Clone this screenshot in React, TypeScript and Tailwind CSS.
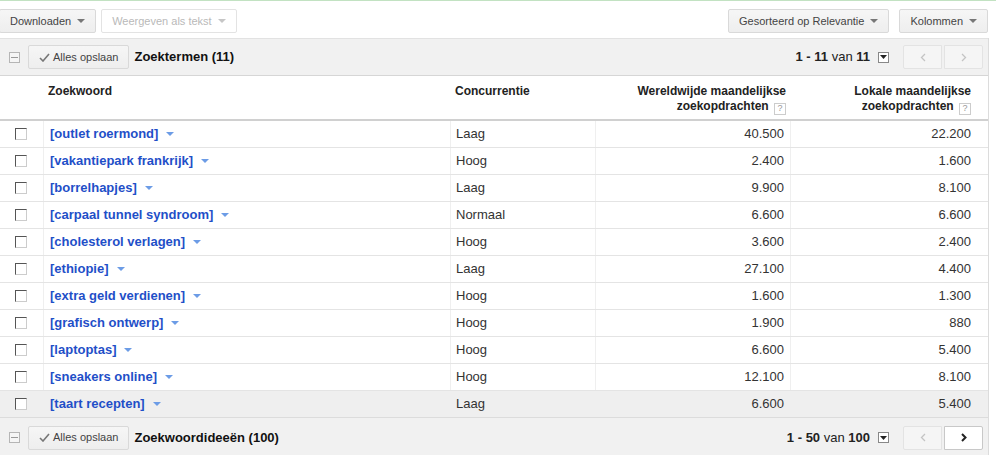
import React from "react";

const rows: [string, string, string, string][] = [
  ["outlet roermond", "Laag", "40.500", "22.200"],
  ["vakantiepark frankrijk", "Hoog", "2.400", "1.600"],
  ["borrelhapjes", "Laag", "9.900", "8.100"],
  ["carpaal tunnel syndroom", "Normaal", "6.600", "6.600"],
  ["cholesterol verlagen", "Hoog", "3.600", "2.400"],
  ["ethiopie", "Laag", "27.100", "4.400"],
  ["extra geld verdienen", "Hoog", "1.600", "1.300"],
  ["grafisch ontwerp", "Hoog", "1.900", "880"],
  ["laptoptas", "Hoog", "6.600", "5.400"],
  ["sneakers online", "Hoog", "12.100", "8.100"],
  ["taart recepten", "Laag", "6.600", "5.400"],
];

function Caret({ color = "#777" }: { color?: string }) {
  return (
    <svg width="8" height="4" viewBox="0 0 8 4" className="inline-block shrink-0">
      <path d="M0 0 L8 0 L4 4 Z" fill={color} />
    </svg>
  );
}

function Btn({
  children,
  disabled,
  className = "",
}: {
  children: React.ReactNode;
  disabled?: boolean;
  className?: string;
}) {
  return (
    <div
      className={
        "flex h-[24px] shrink-0 items-center whitespace-nowrap rounded-[2px] border text-[11px] " +
        (disabled
          ? "border-[#e3e3e3] bg-white text-[#b9b9b9] "
          : "border-[#d9d9d9] bg-gradient-to-b from-[#f6f6f6] to-[#eeeeee] text-[#444] ") +
        className
      }
    >
      {children}
    </div>
  );
}

function MinusBox() {
  return (
    <div className="flex h-[11px] w-[11px] items-center justify-center border border-[#b5b5b5] bg-[#f5f5f5]">
      <div className="h-px w-[7px] bg-[#999]" />
    </div>
  );
}

function Check() {
  return (
    <svg width="11" height="9" viewBox="0 0 11 9" className="shrink-0">
      <path d="M1 5 L4 8 L10 1" stroke="#777" strokeWidth="1.6" fill="none" />
    </svg>
  );
}

function Chevron({ dir, color, bold }: { dir: "l" | "r"; color: string; bold?: boolean }) {
  return (
    <svg width="6" height="9" viewBox="0 0 6 9">
      <path
        d={dir === "l" ? "M5 1 L1.5 4.5 L5 8" : "M1 1 L4.5 4.5 L1 8"}
        stroke={color}
        strokeWidth={bold ? 2 : 1.3}
        fill="none"
      />
    </svg>
  );
}

function DropBox() {
  return (
    <div className="flex h-[11px] w-[11px] items-center justify-center border border-[#888] bg-white">
      <svg width="7" height="4" viewBox="0 0 7 4">
        <path d="M0 0 L7 0 L3.5 4 Z" fill="#222" />
      </svg>
    </div>
  );
}

function Pager({ from, to, total, nextActive }: { from: string; to: string; total: string; nextActive?: boolean }) {
  return (
    <div className="ml-auto flex items-center">
      <div className="whitespace-nowrap text-[13px] text-[#222]">
        <b>
          {from} - {to}
        </b>{" "}
        van <b>{total}</b>
      </div>
      <div className="ml-[8px]">
        <DropBox />
      </div>
      <div className="ml-[14px] flex gap-[2px]">
        <div className="flex h-[24px] w-[39px] items-center justify-center rounded-l-[2px] border border-[#e3e3e3] bg-[#f5f5f5]">
          <Chevron dir="l" color="#c4c4c4" />
        </div>
        <div
          className={
            "flex h-[24px] w-[39px] items-center justify-center rounded-r-[2px] border " +
            (nextActive ? "border-[#c8c8c8] bg-white" : "border-[#e3e3e3] bg-[#f5f5f5]")
          }
        >
          <Chevron dir="r" color={nextActive ? "#222" : "#c4c4c4"} bold={nextActive} />
        </div>
      </div>
    </div>
  );
}

function Checkbox() {
  return (
    <div className="h-[12px] w-[12px] border-t-[1.5px] border-l-[1.5px] border-r border-b border-t-[#555] border-l-[#555] border-r-[#ccc] border-b-[#ccc] bg-white" />
  );
}

function Help() {
  return (
    <span className="ml-[2px] inline-flex h-[12px] w-[12px] items-center justify-center border border-[#ccc] align-[-1px] text-[9px] font-normal text-[#999]">
      ?
    </span>
  );
}

export default function App() {
  return (
    <div
      className="h-[455px] w-[996px] overflow-hidden bg-white text-[#222]"
      style={{ fontFamily: '"Liberation Sans", Arial, sans-serif' }}
    >
      <div className="h-px bg-[#c2e2c2]" />
      {/* toolbar */}
      <div className="flex h-[37px] items-start pt-[8px] pr-[8px]">
        <Btn className="-ml-px gap-[6px] pl-[10px] pr-[10px]">
          Downloaden <Caret />
        </Btn>
        <Btn disabled className="ml-[5px] gap-[6px] pl-[10px] pr-[10px]">
          Weergeven als tekst <Caret color="#c6c6c6" />
        </Btn>
        <Btn className="ml-auto gap-[6px] pl-[10px] pr-[10px]">
          Gesorteerd op Relevantie <Caret />
        </Btn>
        <Btn className="ml-[10px] gap-[6px] pl-[10px] pr-[10px]">
          Kolommen <Caret />
        </Btn>
      </div>

      <div className="w-[989px] border-r border-[#dcdcdc]">
        {/* gray bar */}
        <div className="flex h-[38px] items-center border-t border-b border-t-[#e2e2e2] border-b-[#d6d6d6] bg-[#f1f1f1] pr-[5px]">
          <div className="ml-[9px]">
            <MinusBox />
          </div>
          <Btn className="ml-[8px] gap-[3px] pl-[10px] pr-[10px]">
            <Check /> Alles opslaan
          </Btn>
          <div className="ml-[5px] text-[13px] font-bold text-[#111]">Zoektermen (11)</div>
          <Pager from="1" to="11" total="11" />
        </div>

        {/* header */}
        <div className="flex h-[45px] border-b-2 border-[#d0d0d0] text-[12px] font-bold leading-[15px] text-[#222]">
          <div className="w-[44px]" />
          <div className="w-[407px] pl-[4px] pt-[8px]">Zoekwoord</div>
          <div className="w-[145px] pl-[4px] pt-[8px]">Concurrentie</div>
          <div className="w-[195px] pr-[5px] pt-[8px] text-right">
            Wereldwijde maandelijkse
            <br />
            zoekopdrachten <Help />
          </div>
          <div className="flex-1 pr-[17px] pt-[8px] text-right">
            Lokale maandelijkse
            <br />
            zoekopdrachten <Help />
          </div>
        </div>

        {/* rows */}
        {rows.map(([kw, c, w, l], i) => (
          <div
            key={kw}
            className={
              "flex h-[27px] border-b border-[#e4e4e4] text-[13px] " +
              (i === rows.length - 1 ? "bg-[#efefef]" : "bg-white")
            }
          >
            <div className="flex w-[44px] items-center border-r border-[#efefef] pl-[15px]">
              <Checkbox />
            </div>
            <div className="flex w-[407px] items-center gap-[8px] border-r border-[#efefef] pl-[6px] font-bold text-[#1f4fc8]">
              <span>[{kw}]</span>
              <Caret color="#6c9ce6" />
            </div>
            <div className="flex w-[145px] items-center border-r border-[#efefef] pl-[5px] text-[#333]">{c}</div>
            <div className="flex w-[195px] items-center justify-end border-r border-[#efefef] pr-[6px] text-[#333]">{w}</div>
            <div className="flex flex-1 items-center justify-end pr-[17px] text-[#333]">{l}</div>
          </div>
        ))}

        {/* footer */}
        <div className="-mt-px flex h-[40px] items-center border-t border-[#dcdcdc] bg-[#f1f1f1] pr-[5px]">
          <div className="ml-[9px]">
            <MinusBox />
          </div>
          <Btn className="ml-[8px] gap-[3px] pl-[10px] pr-[10px]">
            <Check /> Alles opslaan
          </Btn>
          <div className="ml-[5px] text-[13px] font-bold text-[#111]">Zoekwoordideeën (100)</div>
          <Pager from="1" to="50" total="100" nextActive />
        </div>
      </div>
    </div>
  );
}
